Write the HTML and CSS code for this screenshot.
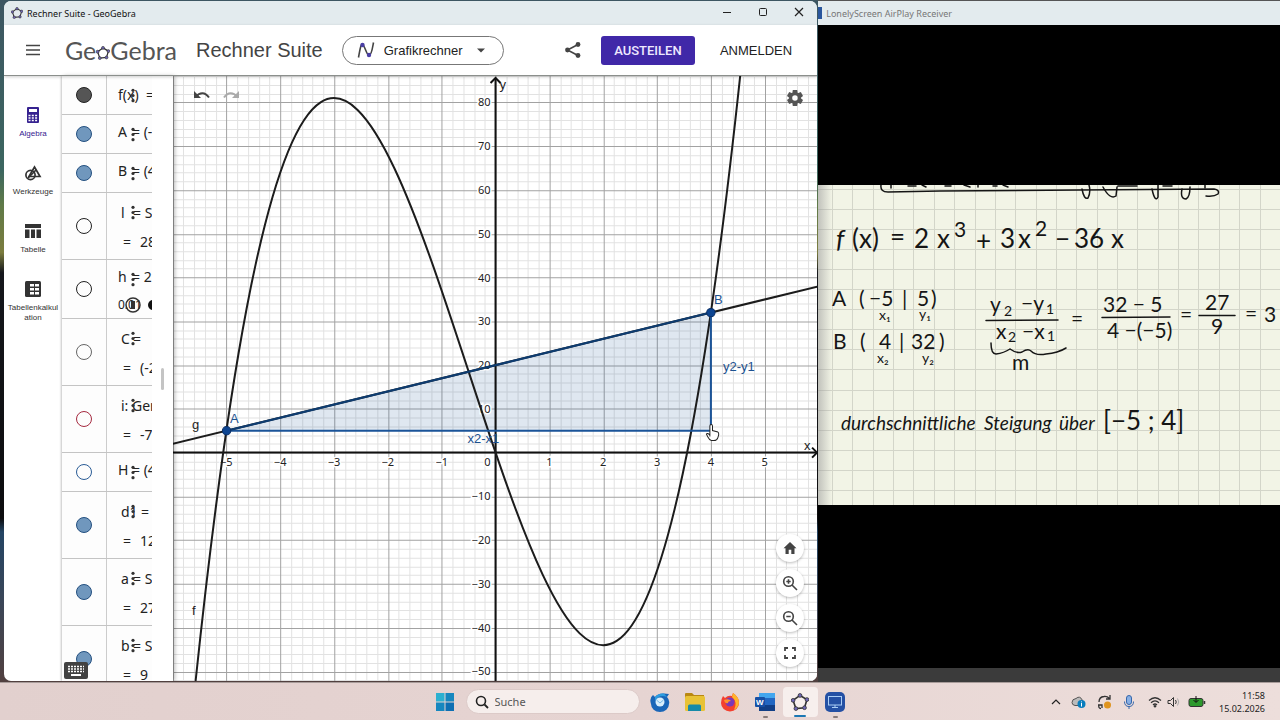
FILE: index.html
```html
<!DOCTYPE html>
<html lang="de">
<head>
<meta charset="utf-8">
<title>Rechner Suite - GeoGebra</title>
<link rel="stylesheet" href="styles.css">
</head>
<body>
<svg width="0" height="0" class="defs" aria-hidden="true">
  <symbol id="penta" viewBox="1 1 22 22">
    <g fill="none" stroke="#333" stroke-width="2"><path d="M12 4 20.500 9 17.500 19 7 20 3.500 10Z"/></g>
    <g fill="#6f67b6" stroke="#333" stroke-width="1"><circle cx="12" cy="4" r="2.300"/><circle cx="20.500" cy="9" r="2.300"/><circle cx="17.500" cy="19" r="2.300"/><circle cx="7" cy="20" r="2.300"/><circle cx="3.500" cy="10" r="2.300"/></g>
  </symbol>
  <symbol id="dots" viewBox="0 0 4 16"><g fill="#333"><circle cx="2" cy="2.500" r="1.700"/><circle cx="2" cy="8" r="1.700"/><circle cx="2" cy="13.500" r="1.700"/></g></symbol>
</svg>

<div class="desktop">
  <main class="window">
    <div class="titlebar">
      <svg class="app-icon"><use href="#penta"/></svg>
      <span class="title">Rechner Suite - GeoGebra</span>
      <button class="win-btn" aria-label="Minimieren"><svg width="12" height="12"><path d="M2 5.500H10" stroke="#222"/></svg></button>
      <button class="win-btn" aria-label="Maximieren"><svg width="12" height="12"><rect x="2.500" y="1.500" width="7" height="7" rx="1" fill="none" stroke="#222"/></svg></button>
      <button class="win-btn" aria-label="Schließen"><svg width="12" height="12"><path d="M2 1 10 9M10 1 2 9" stroke="#222" stroke-width="1.200"/></svg></button>
    </div>

    <header class="header">
      <button class="menu" aria-label="Menü"><svg width="16" height="12"><path d="M1 1.500H15M1 6H15M1 10.500H15" stroke="#444" stroke-width="1.600"/></svg></button>
      <div class="logo"><span>Ge</span><svg class="logo-o"><use href="#penta"/></svg><span>Gebra</span></div>
      <h1 class="suite">Rechner Suite</h1>
      <div class="picker">
        <svg width="18" height="18"><path d="M1.500 16.500C3 8 4 2.500 5.500 3.500 8 5 9.500 14 12 14.500 14.500 14.500 15.500 7 16.500 1.500" fill="none" stroke="#444" stroke-width="1.600"/><circle cx="5.500" cy="4" r="2.200" fill="#4a3fa5"/><circle cx="12" cy="14" r="2.200" fill="#4a3fa5"/></svg>
        <select aria-label="App auswählen"><option>Grafikrechner</option></select>
        <svg width="8" height="5"><path d="M0 0.500H8L4 4.500Z" fill="#444"/></svg>
      </div>
      <button class="share" aria-label="Teilen"><svg width="18" height="18"><path d="M14 3.500 3.500 9 14 14.500" fill="none" stroke="#444" stroke-width="1.600"/><g fill="#444"><circle cx="14" cy="3.500" r="2.400"/><circle cx="3.500" cy="9" r="2.400"/><circle cx="14" cy="14.500" r="2.400"/></g></svg></button>
      <button class="assign">AUSTEILEN</button>
      <a class="login" href="#">ANMELDEN</a>
    </header>

    <div class="workspace">
      <nav class="rail">
        <a class="rail-item active" href="#"><svg width="18" height="18" viewBox="0 0 18 18"><rect x="3" y="1" width="12" height="16" rx="1" fill="currentColor"/><path d="M5 3H13V6H5Z" fill="#fff"/><path d="M4.500 9.500H13.500M4.500 12H13.500M4.500 14.500H13.500" stroke="#fff" stroke-width="1.300" stroke-dasharray="2 1.300"/></svg>Algebra</a>
        <a class="rail-item" href="#"><svg width="18" height="18" viewBox="0 0 18 18"><g fill="none" stroke="currentColor" stroke-width="1.700"><circle cx="6.500" cy="11" r="4.600"/><path d="M10.500 3 16 12.500H5Z"/><path d="M4 14 12 6"/></g></svg>Werkzeuge</a>
        <a class="rail-item" href="#"><svg width="18" height="18" viewBox="0 0 18 18"><g fill="currentColor"><path d="M1 2H17V6H1ZM1 7.500H5.500V16H1ZM7 7.500H11V16H7ZM12.500 7.500H17V16H12.500Z"/></g></svg>Tabelle</a>
        <a class="rail-item" href="#"><svg width="18" height="18" viewBox="0 0 18 18"><rect x="1" y="1" width="16" height="16" rx="1.500" fill="currentColor"/><path d="M6 4H10V6.500H6ZM11 4H15V6.500H11ZM6 8H10V10.500H6ZM11 8H15V10.500H11ZM6 12H10V14.500H6ZM11 12H15V14.500H11Z" fill="#fff"/></svg>Tabellenkalkul<br>ation</a>
      </nav>

      <section class="algebra" aria-label="Algebra">
        <div class="rows">
          <div class="row first"><button class="dot dark" aria-label="f"></button><div class="expr"><p><span class="sym">f(x)</span><span class="gap">=</span></p><svg class="grip"><use href="#dots"/></svg></div></div>
          <div class="row"><button class="dot full" aria-label="A"></button><div class="expr"><p><span class="sym">A</span><span>= (-</span></p><svg class="grip"><use href="#dots"/></svg></div></div>
          <div class="row"><button class="dot full" aria-label="B"></button><div class="expr"><p><span class="sym">B</span><span>= (4</span></p><svg class="grip"><use href="#dots"/></svg></div></div>
          <div class="row tall"><button class="dot black" aria-label="l"></button><div class="expr"><p class="in"><span class="sym">l</span><span>= S</span></p><p class="res"><span>=</span>28</p><svg class="grip"><use href="#dots"/></svg></div></div>
          <div class="row slider"><button class="dot black" aria-label="h"></button><div class="expr"><p><span class="sym">h</span><span>= 2.</span></p><p class="val">0.01</p><svg class="play" viewBox="0 0 36 18"><circle cx="9" cy="9" r="7" fill="none" stroke="#333" stroke-width="1.500"/><path d="M7 5H11V13H7Z" fill="#333"/><circle cx="29" cy="9" r="5" fill="#111"/></svg><svg class="grip"><use href="#dots"/></svg></div></div>
          <div class="row tall"><button class="dot grey" aria-label="C"></button><div class="expr"><p class="in"><span class="sym">C</span><span>=</span></p><p class="res"><span>=</span>(-2</p><svg class="grip"><use href="#dots"/></svg></div></div>
          <div class="row tall"><button class="dot red" aria-label="i"></button><div class="expr"><p class="in">i: Ger</p><p class="res"><span>=</span>-70</p><svg class="grip"><use href="#dots"/></svg></div></div>
          <div class="row"><button class="dot blue" aria-label="H"></button><div class="expr"><p><span class="sym">H</span><span>= (4</span></p><svg class="grip"><use href="#dots"/></svg></div></div>
          <div class="row tall"><button class="dot full" aria-label="d1"></button><div class="expr"><p class="in"><span class="sym">d1</span><span class="late">=</span></p><p class="res"><span>=</span>12</p><svg class="grip"><use href="#dots"/></svg></div></div>
          <div class="row tall"><button class="dot full" aria-label="a"></button><div class="expr"><p class="in"><span class="sym">a</span><span>= S</span></p><p class="res"><span>=</span>27</p><svg class="grip"><use href="#dots"/></svg></div></div>
          <div class="row tall"><button class="dot full" aria-label="b"></button><div class="expr"><p class="in"><span class="sym">b</span><span>= S</span></p><p class="res"><span>=</span>9</p><svg class="grip"><use href="#dots"/></svg></div></div>
        </div>
        <div class="splitter"><i></i></div>
        <button class="keyboard" aria-label="Tastatur"><svg width="24" height="17"><rect width="24" height="17" rx="2" fill="#424242"/><path d="M4 4.500H20M4 7H20M4 9.500H20" stroke="#fff" stroke-width="1.600" stroke-dasharray="2 1"/><path d="M7 13H17" stroke="#fff" stroke-width="2"/></svg></button>
      </section>

      <section class="graph" aria-label="Grafik">
        <svg class="plot" viewBox="173 77 645 604" preserveAspectRatio="xMinYMin slice">
          <path id="minor" class="minor"/>
          <path id="major" class="major"/>
          <path d="M226.500 431.200 710 313.200V431.200Z" fill="#1a5296" fill-opacity=".14"/>
          <path d="M173 453H815M495 681V80" class="axis"/>
          <path d="M811 448 816 453 811 458M490 84 495 79 500 84" class="axis"/>
          <g id="ticks" class="tick"></g>
          <path class="curve" d="M172.500 925C369.600-1382.400 566.700 2126.700 763.750-180.700"/>
          <path class="curve" d="M172.500 444.300 817.500 287"/>
          <path d="M226.500 431.200H710V313.200" class="seg"/>
          <path d="M226.500 431.200 710 313.200" class="seg strong"/>
          <g fill="#0d4592" stroke="#0a2f66"><circle cx="226.500" cy="431.200" r="4.200"/><circle cx="710" cy="313.200" r="4.200"/></g>
          <g class="name"><text x="192" y="429">g</text><text x="192" y="615">f</text><text x="499" y="90">y</text><text x="803" y="450">x</text></g>
          <g class="name blue-name"><text x="230" y="423">A</text><text x="713" y="305">B</text><text x="722" y="372">y2-y1</text><text x="467" y="443">x2-x1</text></g>
          <path d="M709 437V426.500Q709 425 710.300 425T711.600 426.500V431L717 432.500Q718 433 717.800 435L717 438Q716 441 713 441H710.500Q708.500 440.500 707 437.500L705.500 434.500Q706.500 433 709 435.500Z" fill="#fff" stroke="#222"/>
        </svg>
        <div class="history">
          <button aria-label="Rückgängig"><svg width="18" height="12"><path d="M2.500 8C7 3 12 3 16 8.500" fill="none" stroke="#444" stroke-width="2"/><path d="M1 2V9H8Z" fill="#444"/></svg></button>
          <button aria-label="Wiederherstellen"><svg width="18" height="12"><path d="M15.500 8C11 3 6 3 2 8.500" fill="none" stroke="#aaa" stroke-width="2"/><path d="M17 2V9H10Z" fill="#aaa"/></svg></button>
        </div>
        <button class="gear" aria-label="Einstellungen"><svg width="18" height="18" viewBox="-9 -9 18 18"><g fill="#555"><path id="tooth" d="M-2.200-8H2.200L2.800-4H-2.800Z"/><use href="#tooth" transform="rotate(60)"/><use href="#tooth" transform="rotate(120)"/><use href="#tooth" transform="rotate(180)"/><use href="#tooth" transform="rotate(240)"/><use href="#tooth" transform="rotate(300)"/></g><circle r="4.300" fill="none" stroke="#555" stroke-width="3"/></svg></button>
        <div class="zoom">
          <button aria-label="Standardansicht"><svg width="16" height="16"><path d="M8 2 1.500 8.200H3.500V14H6.700V9.800H9.300V14H12.500V8.200H14.500Z" fill="#444"/></svg></button>
          <button aria-label="Vergrößern"><svg width="16" height="16"><g fill="none" stroke="#444" stroke-width="1.600"><circle cx="6.500" cy="6.500" r="4.800"/><path d="M10 10 15 15M4.300 6.500H8.700M6.500 4.300V8.700"/></g></svg></button>
          <button aria-label="Verkleinern"><svg width="16" height="16"><g fill="none" stroke="#444" stroke-width="1.600"><circle cx="6.500" cy="6.500" r="4.800"/><path d="M10 10 15 15M4.300 6.500H8.700"/></g></svg></button>
          <button aria-label="Vollbild"><svg width="16" height="16"><path d="M3 6V3H6M10 3H13V6M13 10V13H10M6 13H3V10" fill="none" stroke="#444" stroke-width="1.800"/></svg></button>
        </div>
      </section>
    </div>
  </main>

  <aside class="receiver">
    <div class="receiver-title"><i></i>LonelyScreen AirPlay Receiver</div>
    <div class="screen">
      <svg class="paper" viewBox="818 185 462 320" preserveAspectRatio="xMinYMin slice">
        <defs><linearGradient id="edge"><stop offset="0" stop-color="#999" stop-opacity=".55"/><stop offset="1" stop-color="#999" stop-opacity="0"/></linearGradient></defs>
        <rect x="818" y="185" width="462" height="320" fill="#f2f4e6"/>
        <path id="squares" stroke="#d3d5c9" fill="none"/>
        <rect x="818" y="185" width="14" height="320" fill="url(#edge)"/>
        <g class="ink">
          <path d="M881 185Q880 192 888 192L940 191 1080 190 1214 189Q1220 190 1218 194 1214 197 1206 196"/>
          <path d="M891 185V188M908 186H916M922 185 926 187M945 186H951M964 185 970 187M978 185V187M993 186H997M1003 185 1008 187"/>
          <path d="M1082 189Q1084 200 1088 198 1091 192 1089 185M1103 187Q1110 200 1116 196L1117 187M1152 189Q1155 203 1158 197L1158 185M1182 189Q1180 199 1186 199 1190 197 1190 187M1118 186H1137M1163 186H1172M1205 185V188"/>
          <path d="M986 320.500 1058 320M1102 317.500 1170 317M1199 315.500 1235 315.500"/>
          <path d="M991 343Q991 354 996 354 1004 353 1010 349 1017 354 1022 352 1028 348 1031 351 1036 356 1046 354 1058 353 1066 348"/>
        </g>
        <g class="hand big">
          <text x="836" y="248" class="it">f</text><text x="852" y="248">(x)</text><text x="890" y="246">=</text><text x="914" y="248">2</text><text x="937" y="248">x</text><text x="976" y="250">+</text><text x="1000" y="248">3</text><text x="1018" y="248">x</text><text x="1055" y="248">−</text><text x="1074" y="248">36</text><text x="1111" y="248">x</text>
          <text x="1103" y="430">[−5 ; 4]</text>
        </g>
        <g class="hand mid">
          <text x="954" y="237">3</text><text x="1035" y="236">2</text>
          <text x="832" y="306">A</text><text x="859" y="306">(</text><text x="869" y="306">−5</text><text x="902" y="306">|</text><text x="917" y="306">5</text><text x="931" y="306">)</text>
          <text x="833" y="349">B</text><text x="860" y="349">(</text><text x="879" y="349">4</text><text x="899" y="349">|</text><text x="911" y="349">32</text><text x="939" y="349">)</text>
          <text x="990" y="312">y</text><text x="1021" y="311">−y</text><text x="996" y="339">x</text><text x="1022" y="339">−x</text><text x="1012" y="370">m</text>
          <text x="1071" y="326">=</text><text x="1103" y="312">32 − 5</text><text x="1107" y="338">4 −(−5)</text><text x="1180" y="322">=</text><text x="1205" y="310">27</text><text x="1211" y="334">9</text><text x="1245" y="321">=</text><text x="1264" y="322">3</text>
        </g>
        <g class="hand small">
          <text x="879" y="320">x₁</text><text x="919" y="319">y₁</text><text x="877" y="363">x₂</text><text x="922" y="363">y₂</text>
          <text x="1004" y="316">2</text><text x="1046" y="314">1</text><text x="1008" y="342">2</text><text x="1047" y="341">1</text>
        </g>
        <g class="hand line"><text x="841" y="430">durchschnittliche</text><text x="984" y="430">Steigung</text><text x="1059" y="430">über</text></g>
      </svg>
    </div>
    <div class="receiver-foot"></div>
  </aside>
</div>

<footer class="taskbar">
  <div class="apps">
    <button class="app" aria-label="Start"><svg width="20" height="20"><path d="M1 1H9.500V9.500H1Z" fill="#2cb0d0"/><path d="M10.500 1H19V9.500H10.500ZM1 10.500H9.500V19H1Z" fill="#1687bf"/><path d="M10.500 10.500H19V19H10.500Z" fill="#0d6fb3"/></svg></button>
    <label class="search"><svg width="14" height="14"><circle cx="6" cy="6" r="4.500" fill="none" stroke="#222" stroke-width="1.600"/><path d="M9.500 9.500 13 13" stroke="#222" stroke-width="1.800"/></svg><input type="text" placeholder="Suche" aria-label="Suche"></label>
    <button class="app" aria-label="Thunderbird"><svg width="20" height="20"><path d="M1 12Q-1 6 3 3L5 5Q8 1 14 1.500L19 2 17 5Q20 8 19 12A9 8 0 0 1 1 12Z" fill="#1a66b8"/><path d="M5 5Q8 1 14 1.500L17 5Q9 2 5 9Z" fill="#2d9de0"/><circle cx="10" cy="10" r="4.500" fill="#d8eefb"/><path d="M6.500 8 10 11 13.500 8" fill="none" stroke="#75b8e8"/></svg></button>
    <button class="app" aria-label="Explorer"><svg width="20" height="20"><path d="M0 2Q0 1 1 1H7L9 3H19V8H0Z" fill="#b98812"/><rect y="4" width="20" height="15" rx="1.500" fill="#e8c235"/><path d="M3 19V14Q3 12.500 4.500 12.500H14.500Q16 12.500 16 14V19Z" fill="#168aa8"/></svg></button>
    <button class="app" aria-label="Firefox"><svg width="20" height="20"><path d="M3 4 5 6Q8 3 12 4L13 1Q19 5 19 11A9 8.500 0 0 1 1 11Q1 7 3 4Z" fill="#f4402f"/><path d="M13 1Q19 5 19 11 18 16 14 18 18 10 12 5Z" fill="#ffb52b"/><circle cx="10" cy="10" r="4.500" fill="#7b39b8"/><path d="M4 8Q9 6 11 9 8 9 8 11 5 12 4 8Z" fill="#ff922b"/></svg></button>
    <button class="app run" aria-label="Word"><svg width="20" height="20"><rect x="4" y="1" width="16" height="18" rx="1.500" fill="#2367c2"/><path d="M4 1H20V6H4Z" fill="#43a6ee"/><path d="M4 13H20V19H4Z" fill="#123f86"/><rect y="5" width="10" height="10" rx="1" fill="#1750a5"/><text x="1" y="13" class="w">W</text></svg></button>
    <button class="app run current" aria-label="GeoGebra"><svg width="18" height="18"><use href="#penta"/></svg></button>
    <button class="app run" aria-label="LonelyScreen"><svg width="20" height="20"><rect width="20" height="20" rx="5" fill="#2450a4"/><rect x="3.500" y="4.500" width="13" height="8.500" fill="none" stroke="#a9cdf5"/><path d="M10 13V15M7 15.500H13" stroke="#a9cdf5"/></svg></button>
  </div>
  <div class="tray">
    <svg width="10" height="8"><path d="M1 6 5 2 9 6" fill="none" stroke="#222" stroke-width="1.200"/></svg>
    <svg width="16" height="14"><path d="M4 10.500H10Q13 9 11.500 5.500 9 0 5 3.500 1 4 1 7.500 1 10 4 10.500Z" fill="#bbb" stroke="#555"/><circle cx="10.500" cy="9" r="4" fill="#087dbd"/><path d="M10.500 8V11.500M10.500 6.500V7.300" stroke="#fff"/></svg>
    <svg width="16" height="16"><path d="M2 8Q2 3 7 2.500 10 2 12.500 4.500M13 1V5H9M4 14.500Q1 14.500 2 10.500M1 11H5V14" fill="none" stroke="#333" stroke-width="1.300"/><circle cx="10.500" cy="11" r="3.500" fill="#df941f"/></svg>
    <svg width="12" height="16"><rect x="3.500" y="1.500" width="5" height="9" rx="2.500" fill="#88b0e5" stroke="#3566aa"/><path d="M1.500 7.500Q1.500 12.500 6 12.500T10.500 7.500M6 12.500V15" fill="none" stroke="#3566aa"/></svg>
    <svg class="wide" width="14" height="12"><path d="M1 4.500Q7-1 13 4.500M3 6.800Q7 3 11 6.800M5 9Q7 7 9 9" fill="none" stroke="#333" stroke-width="1.200"/><circle cx="7" cy="10.300" r="1.200" fill="#333"/></svg>
    <svg width="14" height="12"><path d="M1 4.500H3.500L6.500 1.500V10.500L3.500 7.500H1Z" fill="none" stroke="#333"/><path d="M8.500 4Q10 6 8.500 8" fill="none" stroke="#333"/><path d="M10.500 2.500Q13 6 10.500 9.500" fill="none" stroke="#aaa"/></svg>
    <svg class="battery" width="18" height="12"><rect x="1" y="2.500" width="14" height="8" rx="2" fill="#2d9a2d" stroke="#333"/><path d="M16.500 5V8" stroke="#333" stroke-width="1.500"/><path d="M8 0V6M5.500 4 8 6.500 10.500 4" fill="none" stroke="#111"/></svg>
    <time class="clock">11:58<br>15.02.2026</time>
  </div>
</footer>
<script src="plot.js"></script>
</body>
</html>
```
FILE: plot.js
```js
const OX = 495, OY = 453, UX = 53.75, UY = 4.37;
let minor = '', major = '', ticks = '';
for (let i = -30; i <= 30; i++) {
  const x = Math.round(OX + i * UX / 5) + 0.5;
  const seg = `M${x} 77V681`;
  if (i % 5) minor += seg; else major += seg;
}
for (let i = -28; i <= 45; i++) {
  const y = Math.round(OY - i * 2 * UY) + 0.5;
  const seg = `M173 ${y}H818`;
  if (i % 5) minor += seg; else major += seg;
}
for (let n = -5; n <= 5; n++) {
  if (n) ticks += `<text x="${OX + n * UX}" y="466" text-anchor="middle">${String(n).replace('-', '−')}</text>`;
}
for (let n = -50; n <= 80; n += 10) {
  const y = n ? OY - n * UY + 4 : 466;
  ticks += `<text x="490" y="${y}" text-anchor="end">${String(n).replace('-', '−')}</text>`;
}
document.getElementById('minor').setAttribute('d', minor);
document.getElementById('major').setAttribute('d', major);
document.getElementById('ticks').innerHTML = ticks;

let squares = '';
for (let i = 0; i < 23; i++) squares += `M${Math.round(832 + i * 20.36) + 0.5} 185V505`;
for (let i = 0; i < 16; i++) squares += `M818 ${Math.round(189 + i * 20.05) + 0.5}H1280`;
document.getElementById('squares').setAttribute('d', squares);
```
FILE: styles.css
```css
* { box-sizing: border-box; }
html, body { height: 100%; }
body {
  margin: 0;
  display: grid;
  grid-template-rows: 1fr 38px;
  font-family: "Liberation Sans", Arial, sans-serif;
  color: #333;
  overflow: hidden;
}
button { border: 0; background: none; padding: 0; font: inherit; color: inherit; display: grid; place-items: center; }
a { color: inherit; text-decoration: none; }
svg { display: block; flex: none; }
p { margin: 0; }
.defs { position: absolute; }

.desktop {
  display: grid;
  grid-template-columns: 64% 1fr;
  min-height: 0;
  background: linear-gradient(#3d5662 0, #3c6660 25%, #5f7a48 30%, #7b7c3e 37%, #15171c 40%, #0c0c0e 76%, #244564 78%, #3a4658 88%, #51403f 100%);
}
.window {
  margin: 1px 2px 1px 4px;
  display: grid;
  grid-template-rows: 24px 51px 1fr;
  min-height: 0;
  border-radius: 7px;
  overflow: hidden;
  background: #fff;
}
.titlebar { display: flex; align-items: center; background: #e3ebee; padding-left: 7px; }
.app-icon { width: 12px; height: 12px; }
.title { flex: 1; padding-left: 4px; font: 9px "Noto Sans", sans-serif; color: #111; }
.win-btn { width: 36px; height: 24px; }

.header { display: flex; align-items: center; border-bottom: 1px solid #8b8f8c; box-shadow: 0 1px 3px #0003; z-index: 2; padding: 0 25px 0 21px; }
.menu { width: 16px; height: 24px; }
.logo { display: flex; align-items: center; margin-left: 24px; font: 25px Lato, sans-serif; color: #555; width: 112px; }
.logo-o { width: 14px; height: 14px; margin-top: 5px; }
.suite { margin: 0 0 0 19px; font-size: 20px; font-weight: 400; color: #444; }
.picker { display: flex; align-items: center; margin-left: 19px; width: 162px; height: 29px; border: 1px solid #777; border-radius: 15px; padding: 0 18px 0 14px; }
.picker select { flex: 1; appearance: none; border: 0; background: none; padding: 0 0 0 9px; font: 13px "Liberation Sans", Arial, sans-serif; color: #222; }
.share { margin-left: auto; }
.assign { margin-left: 19px; width: 94px; height: 29px; border-radius: 3px; background: #4028a8; color: #eee9ff; font: 500 13px Roboto, sans-serif; }
.login { margin-left: 25px; font-size: 13px; color: #222; }

.workspace { display: grid; grid-template-columns: 58px 111px 1fr; min-height: 0; }
.rail { display: flex; flex-direction: column; padding-top: 30px; text-align: center; font-size: 8px; line-height: 10px; }
.rail-item { display: flex; flex-direction: column; align-items: center; gap: 5px; height: 58px; white-space: nowrap; }
.rail-item.active { color: #362290; }

.algebra { position: relative; display: grid; grid-template-columns: 90px 1fr; min-height: 0; box-shadow: -1px 0 2px #0003, 2px 0 4px #0004; z-index: 1; background: #fdfdfd; }
.rows { overflow: hidden; min-height: 0; }
.row { display: grid; grid-template-columns: 44px 1fr; height: 39px; border-bottom: 1px solid #c4c4c4; }
.row.tall { height: 67px; }
.row.slider { height: 59px; }
.dot { place-self: center; width: 16px; height: 16px; border-radius: 50%; border: 1px solid #222; }
.dot.dark { background: #555; }
.dot.full { background: #7097bd; border-color: #245080; }
.dot.grey { border-color: #666; }
.dot.red { border-color: #a52a40; }
.dot.blue { border-color: #2a5c96; }
.expr { position: relative; overflow: hidden; white-space: nowrap; border-left: 1px solid #ccc; padding: 3px 0 0 11px; font: 14px "Noto Sans", sans-serif; line-height: 28px; color: #222; }
.first .expr { padding-top: 5px; }
.expr p { display: flex; }
.expr span { flex: none; }
.tall .expr { padding-top: 5px; line-height: 29px; }
.expr .in { padding-left: 3px; }
.sym { width: 14px; }
.in .sym { width: 12px; }
.gap { padding-left: 14px; }
.late { padding-left: 8px; }
.res { padding-left: 5px; }
.expr .res span { width: 17px; }
.val { font-size: 12px; }
.grip { position: absolute; left: 24px; top: 12px; width: 4px; height: 15px; }
.play { position: absolute; left: 17px; top: 36px; width: 36px; height: 18px; }
.splitter { display: grid; place-items: center; background: #fff; }
.splitter i { width: 3px; height: 22px; background: #c4c4c4; border-radius: 2px; }
.keyboard { position: absolute; left: 2px; bottom: 2px; }

.graph { position: relative; min-width: 0; min-height: 0; background: #fff; }
.plot { width: 100%; height: 100%; }
.minor { stroke: #e2e2e2; }
.major { stroke: #a2a2a2; }
.axis { fill: none; stroke: #111; stroke-width: 2; }
.tick { font: 11px "Noto Sans", sans-serif; fill: #222; stroke: #fff; stroke-width: 3; paint-order: stroke; }
.curve { fill: none; stroke: #1c1c1c; stroke-width: 2; }
.seg { fill: none; stroke: #1b5499; stroke-width: 2; }
.strong { stroke: #0e3c70; }
.name { font-size: 13px; fill: #222; }
.blue-name { fill: #1d5290; }
.history { position: absolute; left: 20px; top: 13px; display: flex; gap: 11px; }
.gear { position: absolute; right: 13px; top: 13px; }
.zoom { position: absolute; right: 13px; bottom: 14px; display: grid; gap: 7px; }
.zoom button { width: 28px; height: 28px; border-radius: 50%; background: #fff; box-shadow: 0 1px 3px #0004; }

.receiver { display: grid; grid-template-rows: 25px 1fr 14px; min-height: 0; min-width: 0; background: #000; margin-left: -1px; }
.receiver-title { display: flex; align-items: center; background: #e3ebee; color: #777; font: 9px "Noto Sans", sans-serif; border-top: 1px solid #555; gap: 4px; }
.receiver-title i { width: 4px; height: 12px; background: #2a569c; }
.screen { display: grid; grid-template-rows: 160fr 320fr 163fr; min-height: 0; }
.paper { grid-row: 2; width: 100%; height: 100%; min-height: 0; }
.receiver-foot { background: #3b3b3b; }
.ink { fill: none; stroke: #151515; stroke-width: 1.5px; stroke-linecap: round; }
.hand { font-family: Lato, sans-serif; fill: #151515; }
.big { font-size: 26px; }
.mid { font-size: 21px; }
.small { font-size: 14px; }
.line { font-size: 19px; font-style: italic; }
.it { font-style: italic; }

.taskbar { display: grid; grid-template-columns: 1fr auto 1fr; align-items: center; background: linear-gradient(90deg, #e2d0ce, #e6d4d2 50%, #eddedb); border-top: 1px solid #a89c9a; }
.apps { grid-column: 2; display: flex; align-items: center; }
.app { position: relative; width: 35px; height: 34px; }
.app.current { background: #f7efed; border-radius: 4px; height: 30px; }
.run::after { content: ""; position: absolute; bottom: 1px; width: 5px; height: 2px; border-radius: 1px; background: #8a7c7a; }
.current::after { width: 12px; bottom: 0; background: #1b78b4; }
.search { display: flex; align-items: center; gap: 6px; width: 174px; height: 25px; margin: 0 3px; padding: 0 8px; border-radius: 13px; background: #f6eeec; border: 1px solid #dccac8; }
.search input { width: 100%; border: 0; outline: 0; background: none; padding: 0; font: 11px "Noto Sans", sans-serif; }
.search input::placeholder { color: #555; opacity: 1; }
.w { font: bold 8px "Liberation Sans", sans-serif; fill: #fff; }
.tray { grid-column: 3; display: flex; justify-content: flex-end; align-items: center; gap: 10px; padding-right: 15px; }
.tray .wide { margin: 0 -5px 0 3px; }
.tray .battery { margin-left: -3px; margin-right: 3px; }
.clock { font: 9px "Noto Sans", sans-serif; line-height: 13px; text-align: right; color: #222; }
```
